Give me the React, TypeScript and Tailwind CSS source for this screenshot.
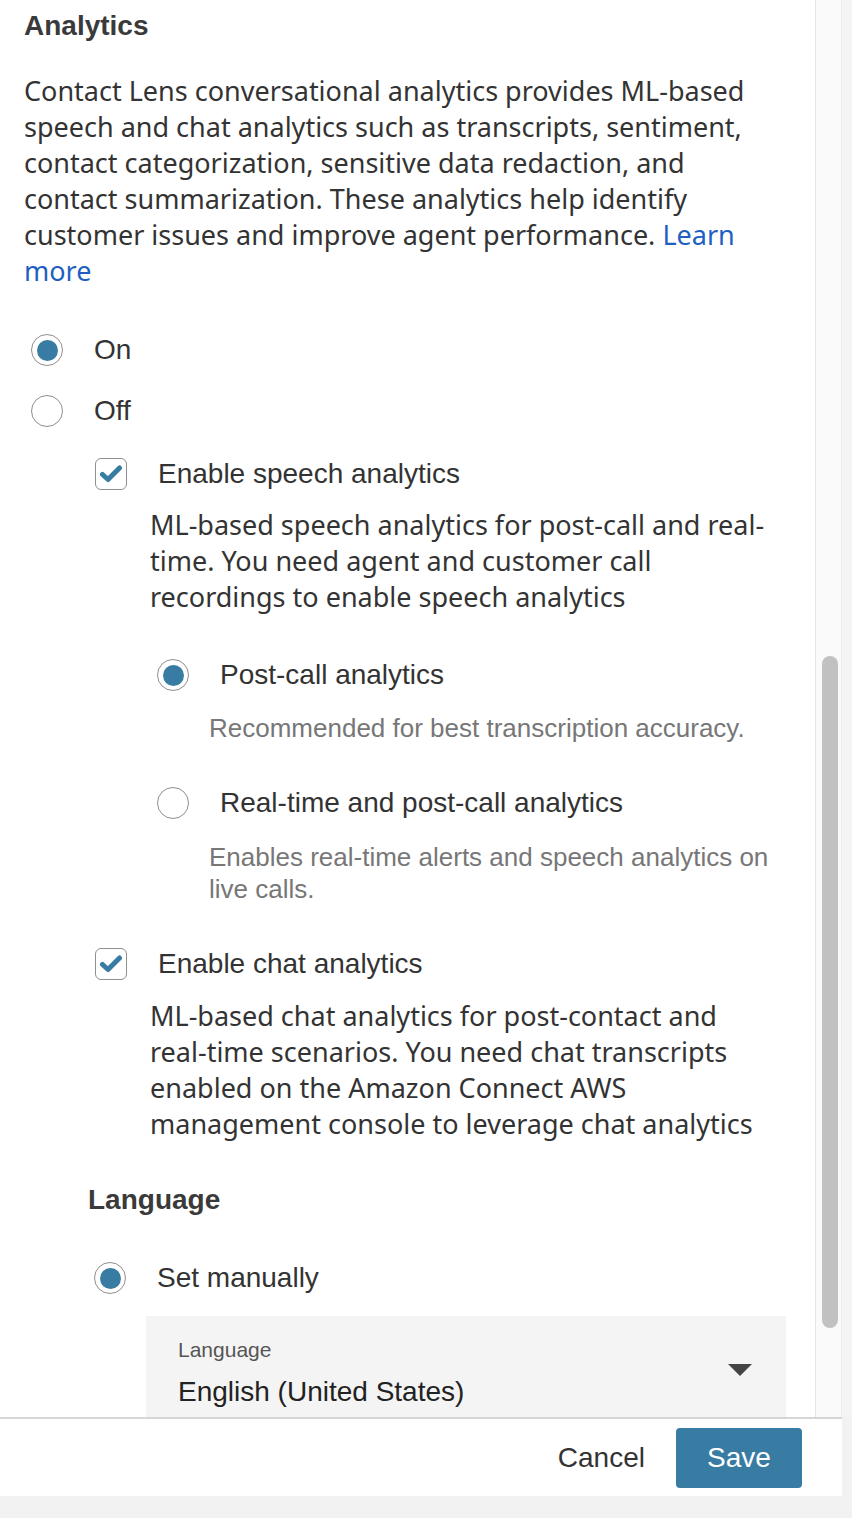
import React from "react";

const BLUE = "#387ca3";

function Radio({ checked }: { checked?: boolean }) {
  return (
    <span className="flex h-[32px] w-[32px] shrink-0 items-center justify-center rounded-full border border-[#8f8f8f] bg-white">
      {checked && <span className="h-[21px] w-[21px] rounded-full bg-[#387ca3]" />}
    </span>
  );
}

function Check() {
  return (
    <span className="flex h-[32px] w-[32px] shrink-0 items-center justify-center rounded-[6px] border border-[#8f8f8f] bg-white">
      <svg width="24" height="20" viewBox="0 0 24 20">
        <path d="M3.5 10.5 L9 15.5 L20.5 4" fill="none" stroke={BLUE} strokeWidth="5" strokeLinecap="round" strokeLinejoin="round" />
      </svg>
    </span>
  );
}

export default function App() {
  const arial = { fontFamily: '"Liberation Sans", Arial, sans-serif' } as React.CSSProperties;
  const ember = { fontFamily: '"Noto Sans", Lato, sans-serif' } as React.CSSProperties;
  return (
    <div className="flex h-[1518px] w-[852px] flex-col bg-[#f2f2f2] text-[#333333]" style={arial}>
      <div className="flex h-[1417px] w-full">
        <div className="h-full w-[815px] overflow-hidden bg-white pl-[24px]">
          <div className="flex h-[52px] items-center text-[28px] font-bold text-[#3a3a3a]">Analytics</div>
          <p className="mt-[21px] w-[785px] whitespace-nowrap text-[27px] leading-[36px] text-[#333]" style={ember}>
            Contact Lens conversational analytics provides ML-based
            <br />
            speech and chat analytics such as transcripts, sentiment,
            <br />
            contact categorization, sensitive data redaction, and
            <br />
            contact summarization. These analytics help identify
            <br />
            customer issues and improve agent performance.{" "}
            <span className="text-[#1f5fc2]">Learn</span>
            <br />
            <span className="text-[#1f5fc2]">more</span>
          </p>

          <div className="mt-[41px] flex h-[40px] items-center pl-[7px]">
            <Radio checked />
            <span className="ml-[31px] text-[28px]">On</span>
          </div>
          <div className="mt-[21px] flex h-[40px] items-center pl-[7px]">
            <Radio />
            <span className="ml-[31px] text-[28px]">Off</span>
          </div>

          <div className="mt-[23px] flex h-[40px] items-center pl-[71px]">
            <Check />
            <span className="ml-[31px] text-[28px]">Enable speech analytics</span>
          </div>
          <p className="mt-[13px] ml-[126px] whitespace-nowrap text-[27px] leading-[36px]" style={ember}>
            ML-based speech analytics for post-call and real-
            <br />
            time. You need agent and customer call
            <br />
            recordings to enable speech analytics
          </p>

          <div className="mt-[40px] flex h-[40px] items-center pl-[133px]">
            <Radio checked />
            <span className="ml-[31px] text-[28px]">Post-call analytics</span>
          </div>
          <p className="mt-[17px] ml-[185px] whitespace-nowrap text-[26px] leading-[32px] text-[#777777]">
            Recommended for best transcription accuracy.
          </p>

          <div className="mt-[39px] flex h-[40px] items-center pl-[133px]">
            <Radio />
            <span className="ml-[31px] text-[28px]">Real-time and post-call analytics</span>
          </div>
          <p className="mt-[18px] ml-[185px] whitespace-nowrap text-[26px] leading-[32px] text-[#777777]">
            Enables real-time alerts and speech analytics on
            <br />
            live calls.
          </p>

          <div className="mt-[39px] flex h-[40px] items-center pl-[71px]">
            <Check />
            <span className="ml-[31px] text-[28px]">Enable chat analytics</span>
          </div>
          <p className="mt-[14px] ml-[126px] whitespace-nowrap text-[27px] leading-[36px]" style={ember}>
            ML-based chat analytics for post-contact and
            <br />
            real-time scenarios. You need chat transcripts
            <br />
            enabled on the Amazon Connect AWS
            <br />
            management console to leverage chat analytics
          </p>

          <div className="mt-[38px] flex h-[40px] items-center pl-[64px] text-[28px] font-bold text-[#3a3a3a]">
            Language
          </div>
          <div className="mt-[38px] flex h-[40px] items-center pl-[70px]">
            <Radio checked />
            <span className="ml-[31px] text-[28px]">Set manually</span>
          </div>

          <div className="mt-[18px] ml-[122px] flex h-[110px] w-[640px] items-start justify-between bg-[#f4f4f4] pl-[32px] pr-[34px]">
            <div className="flex flex-col">
              <span className="mt-[22px] text-[21px] leading-[24px] text-[#555555]">Language</span>
              <span className="mt-[14px] text-[28px] leading-[32px] text-[#222222]">English (United States)</span>
            </div>
            <svg className="mt-[48px]" width="24" height="12" viewBox="0 0 24 12">
              <path d="M0 0 H24 L12 12 Z" fill="#444444" />
            </svg>
          </div>
        </div>
        <div className="relative h-full w-[27px] border-l border-[#e3e3e3] border-r border-r-[#ebebeb] bg-[#fafafa]">
          <div className="absolute left-[6px] top-[656px] h-[672px] w-[16px] rounded-full bg-[#c1c1c1]" />
        </div>
        <div className="h-full flex-1 bg-[#f4f4f4]" />
      </div>
      <div className="flex h-[79px] w-[842px] items-center justify-end border-t-2 border-[#d6d6d6] bg-white pr-[40px]">
        <span className="mr-[31px] text-[28px] text-[#333]">Cancel</span>
        <button className="h-[60px] w-[126px] rounded-[4px] bg-[#387ca3] text-[28px] text-white" style={arial}>
          Save
        </button>
      </div>
      <div className="flex-1 bg-[#f2f2f2]" />
    </div>
  );
}
